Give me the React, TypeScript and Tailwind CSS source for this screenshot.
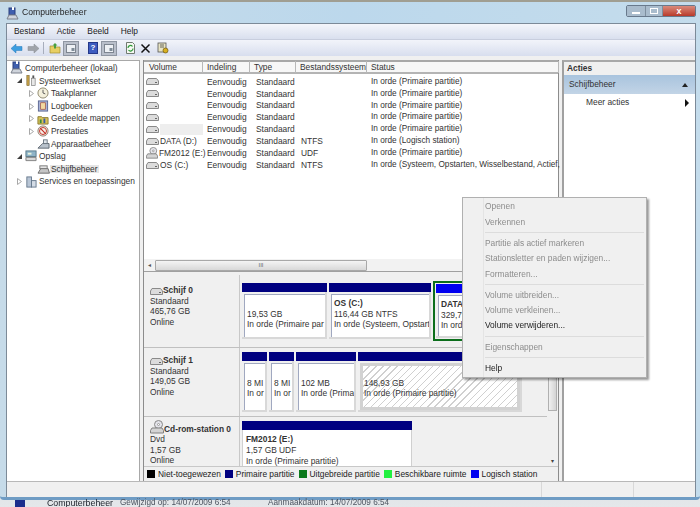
import type { ReactNode } from "react";

const FONT = "[font-family:'Liberation_Sans',Arial,sans-serif]";

function DriveIcon() {
  return (
    <svg width="13" height="9" viewBox="0 0 13 9" className="shrink-0">
      <path d="M2 1.500h8.500l2 2.500v3.500H.5V4z" fill="#dcdcdc" stroke="#8a8a8a" />
      <rect x="9" y="5" width="2" height="1" fill="#666" />
    </svg>
  );
}

function CdIcon({ size = 14 }: { size?: number }) {
  return (
    <svg width={size} height={size} viewBox="0 0 14 14" className="shrink-0">
      <circle cx="8.500" cy="4.500" r="4" fill="#e4e4ea" stroke="#888" />
      <circle cx="8.500" cy="4.500" r="1" fill="#fff" stroke="#999" />
      <path d="M2 8h10l1.500 2.500V13H.5v-2.500z" fill="#d4d4d4" stroke="#808080" />
    </svg>
  );
}

function ComputerIcon() {
  return (
    <svg width="13" height="13" viewBox="0 0 13 13" className="shrink-0">
      <rect x="3" y="1" width="6" height="7" fill="#3f5fae" stroke="#2a3f7c" />
      <path d="M1 12l2-4h7l2 4z" fill="#cfd4dc" stroke="#7a808c" />
      <rect x="6" y="0" width="2" height="3" fill="#fff" />
    </svg>
  );
}

function TreeArrow({ open }: { open?: boolean }) {
  return (
    <svg width="7" height="7" viewBox="0 0 7 7" className="shrink-0">
      {open ? <path d="M6 1v5H1z" fill="#3d3d3d" /> : <path d="M1.500 .5l4 3-4 3z" fill="#fff" stroke="#a8a8a8" />}
    </svg>
  );
}

const treeIcons: Record<string, ReactNode> = {
  tools: (
    <svg width="12" height="13" viewBox="0 0 13 13">
      <rect x="2" y="1" width="2.500" height="11" fill="#c8a24a" stroke="#6f5a24" strokeWidth=".6" />
      <rect x="7" y="4" width="4" height="8" fill="#e8e8e8" stroke="#777" strokeWidth=".7" />
      <rect x="8" y="1" width="2" height="3" fill="#555" />
    </svg>
  ),
  clock: (
    <svg width="12" height="12" viewBox="0 0 13 13">
      <circle cx="6.500" cy="6.500" r="5.500" fill="#f4f0dc" stroke="#8b8468" />
      <path d="M6.500 3v3.500l2.500 1" fill="none" stroke="#555" />
    </svg>
  ),
  log: (
    <svg width="12" height="12" viewBox="0 0 13 13">
      <rect x="1.500" y="1" width="10" height="11" fill="#a9b4d8" stroke="#5a6590" />
      <rect x="4" y="3" width="5" height="7" fill="#f3d9a0" stroke="#a5482c" strokeWidth=".7" />
    </svg>
  ),
  share: (
    <svg width="12" height="12" viewBox="0 0 13 13">
      <path d="M1 4h4l1 1h6v7H1z" fill="#d9c258" stroke="#897a30" />
      <rect x="3" y="7" width="2" height="4" fill="#3a8a3a" />
      <rect x="7" y="6" width="2" height="5" fill="#3a5aa8" />
    </svg>
  ),
  perf: (
    <svg width="12" height="12" viewBox="0 0 13 13">
      <circle cx="6.500" cy="6.500" r="5.500" fill="#f6efe6" stroke="#8b7a6a" />
      <path d="M3.500 3.500l6 6" stroke="#c02820" strokeWidth="1.200" />
      <circle cx="6.500" cy="6.500" r="3.800" fill="none" stroke="#c02820" />
    </svg>
  ),
  device: (
    <svg width="13" height="12" viewBox="0 0 14 13">
      <path d="M1 11l5-5h7v5z" fill="#b8c2cc" stroke="#5c6670" />
      <rect x="7" y="2" width="4" height="4" fill="#dfe6ec" stroke="#6a7680" />
    </svg>
  ),
  storage: (
    <svg width="12" height="12" viewBox="0 0 13 13">
      <rect x="1" y="1" width="11" height="6" fill="#8fb4c8" stroke="#5a7a8a" />
      <path d="M1 8h11v3.500H1z" fill="#d8d8d8" stroke="#7f7f7f" />
      <rect x="3" y="3" width="4" height="2" fill="#e8f4e0" />
    </svg>
  ),
  disk: (
    <svg width="13" height="11" viewBox="0 0 14 12">
      <path d="M1 10l3-5h8l1.500 5z" fill="#c6c6c6" stroke="#666" />
      <rect x="3" y="2" width="8" height="3" fill="#e4e4e4" stroke="#777" />
    </svg>
  ),
  services: (
    <svg width="12" height="12" viewBox="0 0 13 13">
      <rect x="2" y="1" width="5" height="11" fill="#b9c6d6" stroke="#66788c" />
      <rect x="7" y="5" width="5" height="7" fill="#d4dce6" stroke="#66788c" />
    </svg>
  ),
};

function TreeRow({
  indent,
  arrow,
  open,
  icon,
  label,
  selected,
}: {
  indent: string;
  arrow?: boolean;
  open?: boolean;
  icon: string;
  label: string;
  selected?: boolean;
}) {
  return (
    <div className={`flex h-[12.600px] items-center ${indent}`}>
      <span className="flex w-[9px] shrink-0 items-center">{arrow && <TreeArrow open={open} />}</span>
      <span className="flex w-[13px] shrink-0 items-center">{treeIcons[icon]}</span>
      <span className={`whitespace-nowrap px-[1px] ${selected ? "bg-[#e6e6e6]" : ""}`}>{label}</span>
    </div>
  );
}

const VOLUMES = [
  { name: "", fs: "", status: "In orde (Primaire partitie)" },
  { name: "", fs: "", status: "In orde (Primaire partitie)" },
  { name: "", fs: "", status: "In orde (Primaire partitie)" },
  { name: "", fs: "", status: "In orde (Primaire partitie)" },
  { name: "", fs: "", status: "In orde (Primaire partitie)", selected: true },
  { name: "DATA (D:)", fs: "NTFS", status: "In orde (Logisch station)" },
  { name: "FM2012 (E:)", fs: "UDF", status: "In orde (Primaire partitie)", cd: true },
  { name: "OS (C:)", fs: "NTFS", status: "In orde (Systeem, Opstarten, Wisselbestand, Actief," },
];

const COLS = [
  { label: "Volume", w: "w-[58px]" },
  { label: "Indeling", w: "w-[47px]" },
  { label: "Type", w: "w-[46px]" },
  { label: "Bestandssysteem", w: "w-[71px]" },
  { label: "Status", w: "w-[192px]" },
];

function Partition({
  w,
  bar = "bg-[#000080]",
  title,
  lines,
  hatched,
}: {
  w: string;
  bar?: string;
  title?: string;
  lines: string[];
  hatched?: boolean;
}) {
  return (
    <div className={`${w} flex shrink-0 flex-col`}>
      <div className={`h-[9px] shrink-0 ${bar}`} />
      <div className="flex min-h-0 flex-1 flex-col border-b-[2px] border-r-[2px] border-b-[#d8d8d8] border-r-[#d8d8d8] pl-[2px] pt-[2px]">
        <div
          className={`min-h-0 flex-1 overflow-hidden whitespace-nowrap leading-[10.500px] ${
            hatched
              ? "border-[3px] border-[#d2d2d2] bg-[repeating-linear-gradient(135deg,#fff_0px,#fff_4px,#d0d0d0_4px,#d0d0d0_5px)] pl-[1px] pt-[1px]"
              : "border-l border-t border-[#a0a8c0] bg-white pl-[2px] pt-[3px]"
          }`}
        >
          <div className="h-[10.500px] font-bold">{title}</div>
          {lines.map((l) => (
            <div key={l}>{l}</div>
          ))}
        </div>
      </div>
    </div>
  );
}

function DiskLabel({ icon, name, lines, pt }: { icon: ReactNode; name: string; lines: string[]; pt: string }) {
  return (
    <div className={`w-[96px] shrink-0 border-r border-[#c8c8c8] bg-[#f0f0f0] pl-[6px] leading-[10.500px] ${pt}`}>
      <div className="flex items-end font-bold">
        {icon}
        <span className="whitespace-nowrap">{name}</span>
      </div>
      {lines.map((l) => (
        <div key={l}>{l}</div>
      ))}
    </div>
  );
}

function Legend({ color, label }: { color: string; label: string }) {
  return (
    <span className="flex items-center gap-[3px] whitespace-nowrap">
      <span className={`h-[8px] w-[8px] shrink-0 ${color}`} />
      {label}
    </span>
  );
}

function MenuItem({ label, on }: { label: string; on?: boolean }) {
  return (
    <div className={`flex h-[15.300px] items-center pl-[22px] ${on ? "text-[#222]" : "text-[#8c8c8c]"}`}>{label}</div>
  );
}

function Sep() {
  return <div className="my-[2.500px] ml-[22px] mr-[2px] h-[1px] bg-[#dcdcdc]" />;
}

function PanelBtn({ ml }: { ml: string }) {
  return (
    <span className={`flex h-[15px] w-[16px] items-center justify-center border border-[#8f96a2] bg-[#b9bfca] ${ml}`}>
      <svg width="10" height="9" viewBox="0 0 10 9">
        <rect x=".5" y=".5" width="9" height="8" fill="#eef1f5" stroke="#7d8590" />
        <rect x="5.500" y="4" width="3" height="3" fill="#7f8c98" />
      </svg>
    </span>
  );
}

export default function App() {
  return (
    <div
      className={`relative flex h-[507px] w-[700px] flex-col overflow-hidden bg-gradient-to-b from-[#8d98a6] to-[#e4e7ea] text-[8.400px] text-[#333] ${FONT}`}
    >
      <div className="flex h-[500px] shrink-0 flex-col rounded-b-[4px] border-b-[3px] border-t-[2px] border-b-[#6f9cc4] border-t-[#a09e92] bg-gradient-to-r from-[#c6dbe9] via-[#bcd8ec] to-[#c4dcec] pl-[6px] pr-[4px] [filter:blur(.25px)]">
        {/* title bar */}
        <div className="flex h-[21px] shrink-0 items-center">
          <span className="mt-[1px] flex w-[15px]">
            <ComputerIcon />
          </span>
          <span className="ml-[1px] text-[8.600px] text-[#222]">Computerbeheer</span>
          <div className="ml-auto mr-0 mt-[-3px] flex h-[12px] items-stretch overflow-hidden rounded-[2px] border border-[#68798c]">
            <span className="flex w-[18px] items-center justify-center bg-[#a9bccd]">
              <span className="mt-[4px] h-[2px] w-[8px] bg-white" />
            </span>
            <span className="flex w-[18px] items-center justify-center border-x border-[#7d8e9e] bg-[#a9bccd]">
              <span className="h-[6px] w-[8px] border border-white" />
            </span>
            <span className="flex w-[32px] items-center justify-center bg-gradient-to-b from-[#d98a7c] to-[#b8392a] text-[9px] font-bold leading-none text-white">
              x
            </span>
          </div>
        </div>

        <div className="flex min-h-0 flex-1 flex-col border border-b-0 border-[#7c8a98] bg-[#f0f0f0]">
          {/* menu */}
          <div className="flex h-[16px] shrink-0 items-center gap-[12px] border-b border-[#c8cede] bg-gradient-to-b from-[#f4f6fb] to-[#d9dfee] pl-[7px] text-[#222]">
            <span>Bestand</span>
            <span>Actie</span>
            <span>Beeld</span>
            <span>Help</span>
          </div>
          {/* toolbar */}
          <div className="flex h-[16px] shrink-0 items-center bg-gradient-to-b from-[#f2f4fa] to-[#d8deee] pl-[3px]">
            <svg width="13" height="11" viewBox="0 0 13 11">
              <path d="M1 5.500L6 1v2.500h6v4H6V10z" fill="#3c9ee0" stroke="#2a78b8" strokeWidth=".5" />
            </svg>
            <svg width="13" height="11" viewBox="0 0 13 11" className="ml-[4px]">
              <path d="M12 5.500L7 1v2.500H1v4h6V10z" fill="#a0a4aa" stroke="#888c92" strokeWidth=".5" />
            </svg>
            <span className="ml-[3px] h-[12px] w-[1px] bg-[#a8aebc]" />
            <svg width="12" height="12" viewBox="0 0 12 12" className="ml-[5px]">
              <path d="M1 4h4l1 1h5v6H1z" fill="#e8cf62" stroke="#a08c30" strokeWidth=".7" />
              <path d="M6 1l2.500 2.500H7v3H5v-3H3.500z" fill="#4aa040" />
            </svg>
            <PanelBtn ml="ml-[2px]" />
            <span className="ml-[9px] flex h-[12px] w-[10px] items-center justify-center border border-[#24388a] bg-[#3d5cc0] text-[8px] font-bold leading-none text-white">
              ?
            </span>
            <PanelBtn ml="ml-[3px]" />
            <svg width="11" height="12" viewBox="0 0 11 12" className="ml-[8px]">
              <path d="M1.500.5h6l2 2v9h-8z" fill="#f6f8f2" stroke="#707a70" />
              <path d="M3 6a2.500 2.500 0 0 1 4.500-1.500M8 6.500A2.500 2.500 0 0 1 3.500 8" fill="none" stroke="#2f9a3a" strokeWidth="1.200" />
            </svg>
            <svg width="11" height="11" viewBox="0 0 11 11" className="ml-[4px]">
              <path d="M1.500 1.500l8 8M9.500 1.500l-8 8" stroke="#111" strokeWidth="1.500" />
            </svg>
            <svg width="12" height="12" viewBox="0 0 12 12" className="ml-[6px]">
              <rect x="1" y="1" width="8" height="9" fill="#e8e4c4" stroke="#555" strokeWidth=".8" />
              <path d="M3 3h4M3 5h4" stroke="#444" strokeWidth=".8" />
              <circle cx="8.500" cy="8.500" r="2.500" fill="#d8b020" stroke="#6a5510" strokeWidth=".7" />
            </svg>
          </div>

          {/* panes */}
          <div className="flex min-h-0 flex-1 gap-[3px] pt-[4px]">
            {/* tree */}
            <div className="w-[133px] shrink-0 border-r border-t border-[#a8a8a8] bg-white leading-none">
              <div className="flex h-[13.600px] items-center pl-[3px]">
                <span className="mr-[2px] flex">
                  <ComputerIcon />
                </span>
                Computerbeheer (lokaal)
              </div>
              <TreeRow indent="pl-[9px]" arrow open icon="tools" label="Systeemwerkset" />
              <TreeRow indent="pl-[21px]" arrow icon="clock" label="Taakplanner" />
              <TreeRow indent="pl-[21px]" arrow icon="log" label="Logboeken" />
              <TreeRow indent="pl-[21px]" arrow icon="share" label="Gedeelde mappen" />
              <TreeRow indent="pl-[21px]" arrow icon="perf" label="Prestaties" />
              <TreeRow indent="pl-[21px]" icon="device" label="Apparaatbeheer" />
              <TreeRow indent="pl-[9px]" arrow open icon="storage" label="Opslag" />
              <TreeRow indent="pl-[21px]" icon="disk" label="Schijfbeheer" selected />
              <TreeRow indent="pl-[9px]" arrow icon="services" label="Services en toepassingen" />
            </div>

            {/* centre */}
            <div className="flex w-[416px] shrink-0 flex-col border-x border-[#8c8c8c] bg-[#f0f0f0]">
              <div className="flex h-[212px] shrink-0 flex-col border-b border-[#a0a0a0] bg-white">
                <div className="flex h-[14px] shrink-0 items-center border-b-[2px] border-t-[2px] border-b-[#b4b4b4] border-t-[#a8a8a8] bg-[#f7f7f7] pl-[1px]">
                  {COLS.map((c) => (
                    <span key={c.label} className={`${c.w} shrink-0 overflow-hidden whitespace-nowrap border-r border-[#b8b8b8] pl-[4px]`}>
                      {c.label}
                    </span>
                  ))}
                </div>
                <div className="min-h-0 flex-1 pt-[2px]">
                  {VOLUMES.map((v, i) => (
                    <div key={i} className="flex h-[11.900px] items-center pl-[2px]">
                      <span className="flex w-[57px] shrink-0 items-center">
                        {v.cd ? <CdIcon size={12} /> : <DriveIcon />}
                        <span className={`ml-[1px] h-[11px] flex-1 whitespace-nowrap leading-[11px] ${v.selected ? "bg-[#eeeeee]" : ""}`}>
                          {v.name}
                        </span>
                      </span>
                      <span className="w-[47px] shrink-0 pl-[4px]">Eenvoudig</span>
                      <span className="w-[46px] shrink-0 pl-[6px]">Standaard</span>
                      <span className="w-[70px] shrink-0 pl-[5px]">{v.fs}</span>
                      <span className="w-[193px] shrink-0 whitespace-nowrap pl-[5px] text-[8.250px]">{v.status}</span>
                    </div>
                  ))}
                </div>
                <div className="flex h-[12px] shrink-0 items-center bg-[#f2f2f2] pl-[4px] pr-[3px]">
                  <span className="mr-[4px] text-[6px] leading-none text-[#555]">◂</span>
                  <div className="flex h-[11px] w-[212px] items-center justify-center rounded-[1px] border border-[#a8a8a8] bg-gradient-to-b from-[#f4f4f4] to-[#d8d8d8] text-[6px] text-[#666]">
                    III
                  </div>
                </div>
              </div>

              <div className="mt-[3px] flex min-h-0 flex-1 flex-col">
                <div className="relative flex min-h-0 flex-1 overflow-hidden">
                  <div className="min-w-0 flex-1">
                    {/* disk 0 */}
                    <div className="flex h-[73px] border-b border-[#c0c0c0]">
                      <DiskLabel pt="pt-[10px]" icon={<DriveIcon />} name="Schijf 0" lines={["Standaard", "465,76 GB", "Online"]} />
                      <div className="flex min-w-0 flex-1 gap-[2px] overflow-hidden py-[8px] pl-[2px]">
                        <Partition w="w-[85px]" lines={["19,53 GB", "In orde (Primaire par"]} />
                        <Partition w="w-[102px]" title="OS  (C:)" lines={["116,44 GB NTFS", "In orde (Systeem, Opstart"]} />
                        <div className="-my-[2px] flex w-[120px] shrink-0 border-[2px] border-[#0c6e1c] p-[1px]">
                          <Partition w="w-full" bar="bg-[#0000f0]" title="DATA  (D:)" lines={["329,79 GB NTFS", "In orde (Logisch sta"]} />
                        </div>
                      </div>
                    </div>
                    {/* disk 1 */}
                    <div className="flex h-[69px] border-b border-[#c0c0c0]">
                      <DiskLabel pt="pt-[7px]" icon={<DriveIcon />} name="Schijf 1" lines={["Standaard", "149,05 GB", "Online"]} />
                      <div className="flex min-w-0 flex-1 gap-[2px] overflow-hidden py-[4px] pl-[2px]">
                        <Partition w="w-[25px]" lines={["8 MI", "In or"]} />
                        <Partition w="w-[25px]" lines={["8 MI", "In or"]} />
                        <Partition w="w-[60px]" lines={["102 MB", "In orde (Prima"]} />
                        <Partition w="w-[164px]" hatched lines={["148,93 GB", "In orde (Primaire partitie)"]} />
                      </div>
                    </div>
                    {/* cd */}
                    <div className="flex h-[50px] overflow-hidden">
                      <DiskLabel pt="pt-[3px]" icon={<CdIcon />} name="Cd-rom-station 0" lines={["Dvd", "1,57 GB", "Online"]} />
                      <div className="flex min-w-0 flex-1 pl-[2px] pt-[4px]">
                        <div className="flex h-[60px] w-[170px] flex-col">
                          <div className="h-[9px] shrink-0 bg-[#000080]" />
                          <div className="h-[51px] border-x border-[#d0d0d0] bg-white pl-[3px] pt-[4px] leading-[11px]">
                            <div className="font-bold">FM2012  (E:)</div>
                            <div>1,57 GB UDF</div>
                            <div>In orde (Primaire partitie)</div>
                          </div>
                        </div>
                      </div>
                    </div>
                  </div>
                  {/* vertical scrollbar */}
                  <div className="flex w-[11px] shrink-0 flex-col items-center bg-[#f0f0f0]">
                    <div className="mx-auto h-[136px] w-[9px] shrink-0 border border-[#b0b0b0] bg-gradient-to-r from-[#f0f0f0] to-[#d4d4d4]" />
                    <span className="mt-auto pb-[2px] text-[6px] leading-none text-[#444]">▾</span>
                  </div>
                </div>
                {/* legend */}
                <div className="flex h-[15px] shrink-0 items-center gap-[4px] border-t border-[#c8c8c8] bg-[#f0f0f0] pl-[3px] text-[#222]">
                  <Legend color="bg-black" label="Niet-toegewezen" />
                  <Legend color="bg-[#000080]" label="Primaire partitie" />
                  <Legend color="bg-[#0c7a1c]" label="Uitgebreide partitie" />
                  <Legend color="bg-[#22f040]" label="Beschikbare ruimte" />
                  <Legend color="bg-[#0000f0]" label="Logisch station" />
                </div>
              </div>
            </div>

            {/* actions */}
            <div className="min-w-0 flex-1 border-l-[2px] border-t-[2px] border-l-[#a0a0a0] border-t-[#a8a8a8] bg-white">
              <div className="flex h-[13px] items-center bg-[#f0f0f0] pl-[3px] font-bold">Acties</div>
              <div className="flex h-[19px] items-center justify-between bg-gradient-to-b from-[#a9c4de] to-[#c2d4e6] pl-[5px] pr-[7px]">
                <span>Schijfbeheer</span>
                <span className="h-0 w-0 border-x-[3px] border-b-[4px] border-x-transparent border-b-[#222]" />
              </div>
              <div className="flex h-[17px] items-center justify-between pl-[22px] pr-[6px]">
                <span>Meer acties</span>
                <span className="h-0 w-0 border-y-[4px] border-l-[4px] border-y-transparent border-l-[#111]" />
              </div>
            </div>
          </div>
          {/* status bar */}
          <div className="flex h-[16px] shrink-0 border-t border-[#b8b8b8] bg-[#f0f0f0]">
            <span className="ml-auto h-full w-[92px] border-l border-[#d8d8d8]" />
            <span className="h-full w-[62px] border-l border-[#d8d8d8]" />
          </div>
        </div>
      </div>

      {/* desktop behind the window */}
      <div className="flex h-[7px] shrink-0 items-center whitespace-nowrap text-[8.200px] text-[#4c5460] [filter:blur(.5px)]">
        <span className="ml-[15px] h-[7px] w-[10px] shrink-0 bg-[#1c2c8c]" />
        <span className="ml-[22px] w-[73px] shrink-0 text-[8.800px] text-[#1a1f28]">Computerbeheer</span>
        <span className="w-[148px] shrink-0">Gewijzigd op: 14/07/2009 6:54</span>
        <span>Aanmaakdatum: 14/07/2009 6:54</span>
      </div>

      {/* context menu */}
      <div className="absolute left-[462px] top-[197px] w-[185px] border border-[#b0b0b0] bg-[#f0f0f0] py-[1px] shadow-[2px_2px_2px_rgba(0,0,0,0.4)] [filter:blur(.2px)]">
        <div className="absolute bottom-0 left-[20px] top-0 w-[1px] bg-[#e4e4e4]" />
        <MenuItem label="Openen" />
        <MenuItem label="Verkennen" />
        <Sep />
        <MenuItem label="Partitie als actief markeren" />
        <MenuItem label="Stationsletter en paden wijzigen..." />
        <MenuItem label="Formatteren..." />
        <Sep />
        <MenuItem label="Volume uitbreiden..." />
        <MenuItem label="Volume verkleinen..." />
        <MenuItem label="Volume verwijderen..." on />
        <Sep />
        <MenuItem label="Eigenschappen" />
        <Sep />
        <MenuItem label="Help" on />
      </div>
    </div>
  );
}
